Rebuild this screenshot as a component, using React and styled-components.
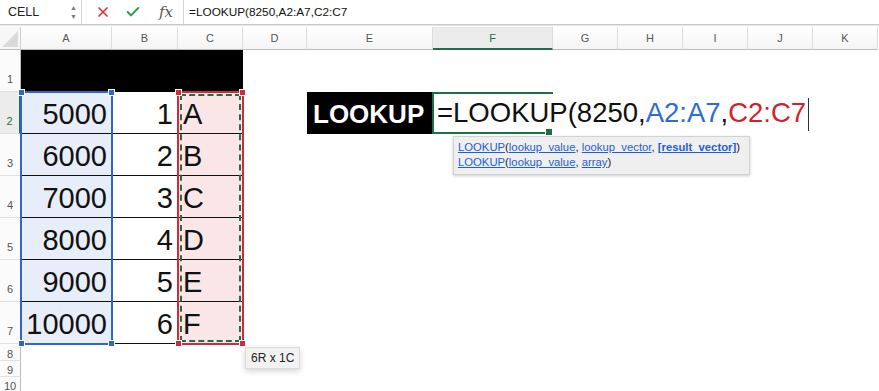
import React from 'react';
import styled, { createGlobalStyle } from 'styled-components';
import { X, Check } from 'lucide-react';

const GlobalStyle = createGlobalStyle`
    html, body {
        margin: 0;
        padding: 0;
        background: #ffffff;
    }
    body {
        font-family: "Liberation Sans", Arial, sans-serif;
        overflow: hidden;
    }
`

const blue = '#2f66cc';
const red = '#d22a3a';
const green = '#1d7044';

const Page = styled.div`
    width: 879px;
    height: 391px;
    overflow: hidden;
    background: #fff;
`

const FormulaBar = styled.div`
    display: flex;
    align-items: center;
    height: 24px;
    border-bottom: 1px solid #c9c9c9;
    box-shadow: 0 1px 0 #e6e6e6;
    margin-bottom: 2px;
`

const NameBox = styled.div`
    display: flex;
    align-items: center;
    justify-content: space-between;
    width: 82px;
    height: 100%;
    padding: 0 4px 0 8px;
    box-sizing: border-box;
    border-right: 1px solid #d4d4d4;
    font-size: 12.5px;
    color: #222;
`

const Spinner = styled.div`
    display: flex;
    flex-direction: column;
    gap: 2px;
    font-size: 7px;
    line-height: 7px;
    color: #7a7a7a;
`

const Actions = styled.div`
    display: flex;
    align-items: center;
    gap: 14px;
    height: 100%;
    padding: 0 10px 0 13px;
    border-right: 1px solid #d4d4d4;
`

const Fx = styled.span`
    font-family: "DejaVu Serif", "Liberation Serif", serif;
    font-style: italic;
    font-size: 15px;
    color: #555;
    margin-left: 4px;
`

const FormulaText = styled.div`
    padding-left: 5px;
    font-size: 11.8px;
    color: #111;
`

const Sheet = styled.div`
    display: grid;
    grid-template-columns: 21px 91px 66px 65px 64px 126px 120px 65px 65px 65px 65px 65px;
    grid-template-rows: 23px repeat(7, 42px) 17px 16px 16px;
    position: relative;
`

const Corner = styled.div`
    grid-row: 1;
    grid-column: 1;
    position: relative;
    background: #f7f7f7;
    border-bottom: 1px solid #bdbdbd;
    border-right: 1px solid #cfcfcf;
    &::after {
        content: "";
        position: absolute;
        right: 2px;
        bottom: 2px;
        width: 16px;
        height: 16px;
        background: #dadada;
        clip-path: polygon(100% 0, 100% 100%, 0 100%);
    }
`

const ColHeader = styled.div`
    grid-row: 1;
    grid-column: ${p => p.$c};
    display: flex;
    align-items: center;
    justify-content: center;
    font-size: 11px;
    color: ${p => (p.$active ? green : '#555')};
    background: ${p => (p.$active ? '#ececec' : 'linear-gradient(#ffffff, #f4f4f4)')};
    border-right: 1px solid #dcdcdc;
    border-bottom: ${p => (p.$active ? `2px solid ${green}` : '1px solid #bdbdbd')};
    box-sizing: border-box;
`

const RowHeader = styled.div`
    grid-row: ${p => p.$r};
    grid-column: 1;
    display: flex;
    align-items: flex-end;
    justify-content: center;
    padding-bottom: ${p => (p.$small ? '0' : '6px')};
    font-size: 11px;
    color: ${p => (p.$active ? green : '#555')};
    background: ${p => (p.$active ? '#ececec' : '#fbfbfb')};
    border-right: ${p => (p.$active ? `2px solid ${green}` : '1px solid #bdbdbd')};
    border-bottom: 1px solid #e1e1e1;
    box-sizing: border-box;
`

const Cell = styled.div`
    grid-row: ${p => p.$r};
    grid-column: ${p => p.$c};
    display: flex;
    align-items: center;
    justify-content: ${p => (p.$align === 'right' ? 'flex-end' : 'flex-start')};
    padding: 3px 5px 0 5px;
    box-sizing: border-box;
    font-size: 29px;
    color: #111;
    background: ${p => p.$bg || '#fff'};
    border-bottom: ${p => (p.$lined ? '1px solid #111' : 'none')};
    white-space: nowrap;
`

const BlackCell = styled.div`
    grid-row: ${p => p.$r};
    grid-column: ${p => p.$c};
    background: #000;
    display: flex;
    align-items: center;
    padding: 2px 6px 0;
    font-size: 26px;
    font-weight: 700;
    color: #fff;
`

const Range = styled.div`
    grid-column: ${p => p.$c};
    grid-row: 3 / 9;
    position: relative;
    z-index: 2;
    margin: -1px;
    border: 2px solid ${p => p.$color};
    pointer-events: none;
`

const Ants = styled.div`
    position: absolute;
    inset: 1px;
    border: 2px dashed ${green};
`

const Handle = styled.span`
    position: absolute;
    width: 5px;
    height: 5px;
    background: ${p => p.$color};
    border: 1px solid #fff;
    ${p => (p.$top ? 'top: -4px;' : 'bottom: -4px;')}
    ${p => (p.$left ? 'left: -4px;' : 'right: -4px;')}
`

const Edit = styled.div`
    grid-column: 7;
    grid-row: 3;
    position: relative;
    z-index: 3;
    display: flex;
    align-items: center;
    padding: 2px 0 0 3px;
    border: 2px solid ${green};
    border-right: none;
    margin-left: -1px;
    font-size: 27.5px;
    color: #111;
    white-space: nowrap;
`

const Ref = styled.span`
    color: ${p => p.$color};
`

const Caret = styled.span`
    display: inline-block;
    width: 1px;
    height: 33px;
    background: #333;
    margin-left: 2px;
    vertical-align: middle;
`

const FillHandle = styled.span`
    position: absolute;
    right: 0;
    bottom: -4px;
    width: 6px;
    height: 6px;
    background: ${green};
    border: 1px solid #fff;
`

const Hint = styled.div`
    position: absolute;
    left: 19px;
    top: 42px;
    width: 297px;
    padding: 3px 4px 4px 4px;
    box-sizing: border-box;
    background: #efefef;
    border: 1px solid #d2d2d2;
    box-shadow: 0 1px 3px rgba(0, 0, 0, 0.2);
    font-size: 11.3px;
    line-height: 15px;
    color: #222;
`

const Link = styled.span`
    color: #1f5fd6;
    text-decoration: underline;
    font-weight: ${p => (p.$bold ? 700 : 400)};
`

const SizeTip = styled.div`
    position: absolute;
    left: calc(100% + 3px);
    top: calc(100% + 4px);
    padding: 3px 5px;
    background: #f2f2f2;
    border: 1px solid #dcdcdc;
    box-shadow: 0 2px 6px rgba(0, 0, 0, 0.18);
    font-size: 12px;
    color: #222;
    white-space: nowrap;
`

const columns = ['A', 'B', 'C', 'D', 'E', 'F', 'G', 'H', 'I', 'J', 'K'];
const data = [
    [5000, 1, 'A'],
    [6000, 2, 'B'],
    [7000, 3, 'C'],
    [8000, 4, 'D'],
    [9000, 5, 'E'],
    [10000, 6, 'F'],
];

const App = () => {
    return (
        <Page>
            <GlobalStyle />
            <FormulaBar>
                <NameBox>
                    CELL
                    <Spinner>
                        <span>▲</span>
                        <span>▼</span>
                    </Spinner>
                </NameBox>
                <Actions>
                    <X size={16} color="#e0322f" strokeWidth={2.5} />
                    <Check size={16} color="#2f9e4a" strokeWidth={3} />
                    <Fx>fx</Fx>
                </Actions>
                <FormulaText>=LOOKUP(8250,A2:A7,C2:C7</FormulaText>
            </FormulaBar>

            <Sheet>
                <Corner />
                {columns.map((c, i) => (
                    <ColHeader key={c} $c={i + 2} $active={c === 'F'}>{c}</ColHeader>
                ))}

                <RowHeader $r={2}>1</RowHeader>
                <BlackCell $r={2} $c="2 / 5" />

                {data.map((row, i) => {
                    const r = i + 2;
                    const gr = r + 1;
                    return (
                        <React.Fragment key={r}>
                            <RowHeader $r={gr} $active={r === 2}>{r}</RowHeader>
                            <Cell $r={gr} $c={2} $align="right" $bg="#e7edf9" $lined>{row[0]}</Cell>
                            <Cell $r={gr} $c={3} $align="right" $lined>{row[1]}</Cell>
                            <Cell $r={gr} $c={4} $bg="#fae6e7" $lined>{row[2]}</Cell>
                            {r === 2 && <BlackCell $r={gr} $c={6}>LOOKUP</BlackCell>}
                        </React.Fragment>
                    );
                })}

                {[8, 9, 10].map(r => (
                    <RowHeader key={r} $r={r + 1} $small>{r}</RowHeader>
                ))}

                <Range $c={2} $color={blue}>
                    <Handle $color={blue} $top $left />
                    <Handle $color={blue} $top />
                    <Handle $color={blue} $left />
                    <Handle $color={blue} />
                </Range>

                <Range $c={4} $color={red}>
                    <Ants />
                    <Handle $color={red} $top $left />
                    <Handle $color={red} $top />
                    <Handle $color={red} $left />
                    <Handle $color={red} />
                    <SizeTip>6R x 1C</SizeTip>
                </Range>

                <Edit>
                    <span>
                        =LOOKUP(8250,<Ref $color="#2f6bd6">A2:A7</Ref>,<Ref $color="#d61f2c">C2:C7</Ref>
                        <Caret />
                    </span>
                    <FillHandle />
                    <Hint>
                        <div>
                            <Link>LOOKUP</Link>(<Link>lookup_value</Link>, <Link>lookup_vector</Link>, <Link $bold>[result_vector]</Link>)
                        </div>
                        <div>
                            <Link>LOOKUP</Link>(<Link>lookup_value</Link>, <Link>array</Link>)
                        </div>
                    </Hint>
                </Edit>
            </Sheet>
        </Page>
    );
}

export default App
